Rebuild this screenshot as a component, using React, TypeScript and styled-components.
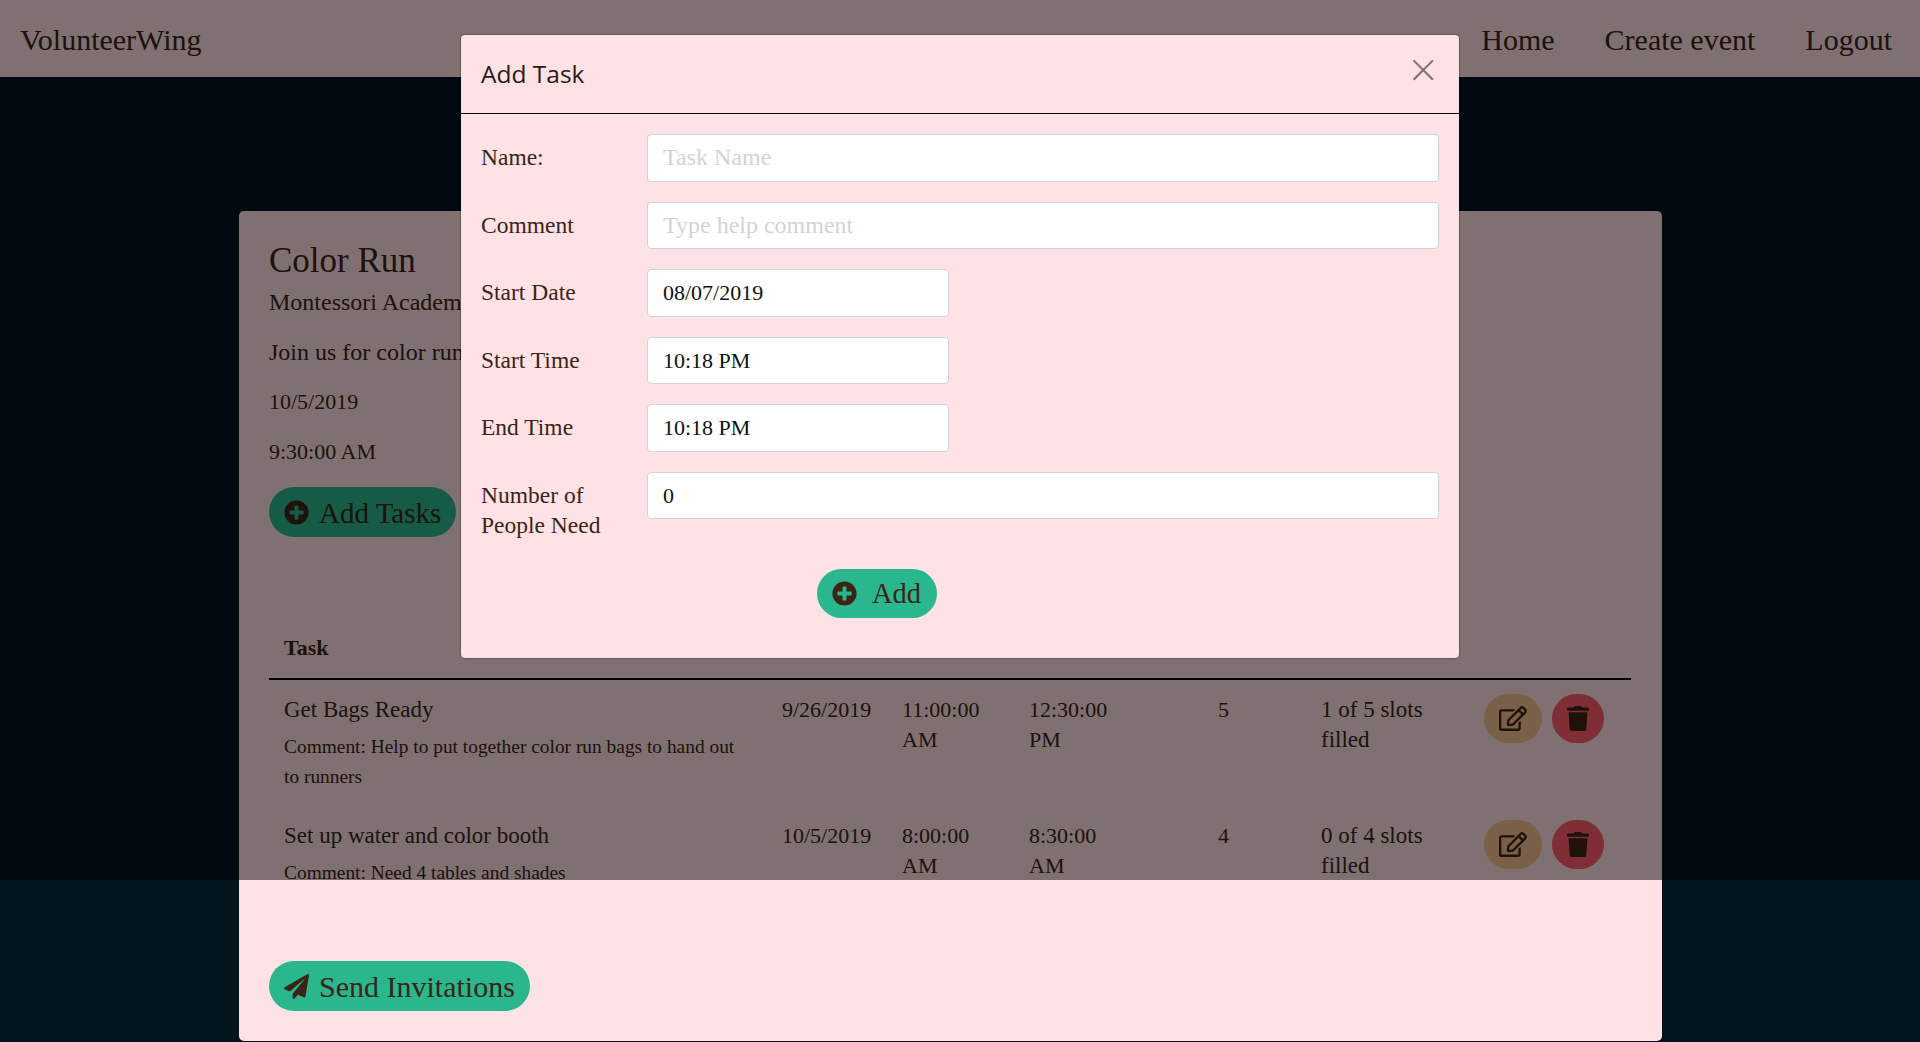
import React from 'react';
import styled, { createGlobalStyle } from 'styled-components';
import { FaPlusCircle, FaPaperPlane, FaRegEdit, FaTrash } from 'react-icons/fa';

const GlobalStyle = createGlobalStyle`
    html, body {
        margin: 0;
        height: 100%;
        overflow: hidden;
        background: #02151f;
    }
    body {
        font-family: "Liberation Serif", serif;
        font-size: 23px;
        line-height: 30px;
        color: #3c2415;
    }
    * {
        box-sizing: border-box;
    }
`

const Page = styled.div`
    position: relative;
    height: 1042px;
    overflow: hidden;
`

const Nav = styled.nav`
    height: 77px;
    background: #ffe2e5;
    display: flex;
    align-items: center;
    justify-content: space-between;
    padding: 2px 28px 0 20px;
    font-size: 30px;
`

const Brand = styled.div``

const NavLinks = styled.div`
    display: flex;
    gap: 50px;
`

const Card = styled.main`
    width: 1423px;
    margin: 134px 0 0 239px;
    background: #ffe2e5;
    border-radius: 5px;
    padding: 30px;
    height: 830px;
`

const EventTitle = styled.h1`
    margin: 0 0 6px;
    font-size: 35px;
    font-weight: 400;
    line-height: 40px;
`

const EventLine = styled.p<{ $numeric?: boolean }>`
    margin: 0 0 20px;
    font-size: ${p => (p.$numeric ? '22px' : '24px')};
`

const PillButton = styled.button<{ $size?: number }>`
    display: inline-flex;
    align-items: center;
    gap: 10px;
    height: 50px;
    padding: 2px 15px 0;
    border: none;
    border-radius: 25px;
    background: #2ab78d;
    color: inherit;
    font-family: inherit;
    font-size: ${p => p.$size || 29}px;
    svg {
        width: 25px;
        height: 25px;
        margin-top: -2px;
        flex: none;
    }
`

const TableWrap = styled.div`
    margin-top: 80px;
    height: 263px;
    overflow: hidden;
`

const Table = styled.table`
    width: 1362px;
    table-layout: fixed;
    border-collapse: collapse;
`

const HeadCell = styled.th<{ $w: number }>`
    width: ${p => p.$w}px;
    padding: 16px 15px 15px;
    text-align: left;
    font-size: 22px;
    font-weight: 700;
    border-bottom: 2px solid #000;
`

const Cell = styled.td<{ $numeric?: boolean; $center?: boolean }>`
    padding: 15px 15px 14px;
    vertical-align: top;
    font-size: ${p => (p.$numeric ? '22px' : '23px')};
    text-align: ${p => (p.$center ? 'center' : 'left')};
`

const Comment = styled.div`
    margin-top: 7px;
    font-size: 19.4px;
`

const Actions = styled.div`
    display: flex;
    gap: 10px;
`

const RoundButton = styled.button<{ $bg: string; $iconW: number }>`
    height: 49px;
    margin-top: -1px;
    padding: 0 15px;
    border: none;
    border-radius: 25px;
    background: ${p => p.$bg};
    color: inherit;
    display: flex;
    align-items: center;
    svg {
        width: ${p => p.$iconW}px;
        height: 25px;
    }
`

const SendRow = styled.div`
    margin-top: 81px;
`

const Backdrop = styled.div`
    position: absolute;
    top: 0;
    left: 0;
    right: 0;
    height: 880px;
    background: rgba(0, 0, 0, 0.5);
`

const Modal = styled.div`
    position: absolute;
    top: 34px;
    left: 460px;
    width: 1000px;
    height: 625px;
    background: #ffe2e5;
    border: 1px solid rgba(0, 0, 0, 0.2);
    border-radius: 5px;
    background-clip: padding-box;
`

const ModalHeader = styled.div`
    height: 79px;
    display: flex;
    justify-content: space-between;
    align-items: flex-start;
    padding: 21px 20px 0;
    border-bottom: 1px solid #000;
`

const ModalTitle = styled.h2`
    margin: 0;
    font-family: "Open Sans", sans-serif;
    font-size: 24.5px;
    font-weight: 400;
    line-height: 36px;
    color: #2a1a10;
`

const CloseButton = styled.button`
    border: none;
    background: none;
    padding: 0;
    margin: -9px 2px 0 0;
    font-family: "Open Sans", sans-serif;
    font-size: 48px;
    font-weight: 300;
    line-height: 44px;
    color: #000;
    opacity: 0.5;
`

const ModalBody = styled.form`
    padding: 20px 20px 0;
    display: flex;
    flex-direction: column;
    gap: 20px;
`

const FormRow = styled.div`
    display: grid;
    grid-template-columns: 166px 1fr;
`

const FieldLabel = styled.label`
    padding-top: 8px;
    font-size: 23.5px;
`

const Field = styled.input<{ $short?: boolean }>`
    display: block;
    width: ${p => (p.$short ? '302px' : '100%')};
    height: 47.5px;
    padding: 1px 15px 0;
    background: #fff;
    border: 1px solid #ced4da;
    border-radius: 4px;
    font-family: inherit;
    font-size: 22px;
    color: #111;
    &::placeholder {
        font-size: 24px;
        color: #d6d2d3;
    }
`

const AddRow = styled.div`
    padding: 9px 0 0 336px;
`

const AddButton = styled(PillButton)`
    height: 49px;
    width: 120px;
    gap: 15px;
`

const columns = [
    { label: 'Task', width: 498 },
    { label: 'Date', width: 120 },
    { label: 'Start', width: 127 },
    { label: 'End', width: 127 },
    { label: 'Need', width: 165 },
    { label: 'Slots', width: 163 },
    { label: '', width: 162 },
]

const tasks = [
    {
        name: 'Get Bags Ready',
        comment: 'Comment: Help to put together color run bags to hand out to runners',
        date: '9/26/2019',
        start: '11:00:00 AM',
        end: '12:30:00 PM',
        need: 5,
        slots: '1 of 5 slots filled',
    },
    {
        name: 'Set up water and color booth',
        comment: 'Comment: Need 4 tables and shades',
        date: '10/5/2019',
        start: '8:00:00 AM',
        end: '8:30:00 AM',
        need: 4,
        slots: '0 of 4 slots filled',
    },
]

const App = () => {
    return (
        <Page>
            <GlobalStyle />
            <Nav>
                <Brand>VolunteerWing</Brand>
                <NavLinks>
                    <span>Home</span>
                    <span>Create event</span>
                    <span>Logout</span>
                </NavLinks>
            </Nav>
            <Card>
                <EventTitle>Color Run</EventTitle>
                <EventLine>Montessori Academy</EventLine>
                <EventLine>Join us for color run</EventLine>
                <EventLine $numeric>10/5/2019</EventLine>
                <EventLine $numeric>9:30:00 AM</EventLine>
                <PillButton><FaPlusCircle />Add Tasks</PillButton>
                <TableWrap>
                    <Table>
                        <thead>
                            <tr>
                                {columns.map(col => <HeadCell key={col.label} $w={col.width}>{col.label}</HeadCell>)}
                            </tr>
                        </thead>
                        <tbody>
                            {tasks.map(task => (
                                <tr key={task.name}>
                                    <Cell>
                                        {task.name}
                                        <Comment>{task.comment}</Comment>
                                    </Cell>
                                    <Cell $numeric>{task.date}</Cell>
                                    <Cell $numeric>{task.start}</Cell>
                                    <Cell $numeric>{task.end}</Cell>
                                    <Cell $numeric $center>{task.need}</Cell>
                                    <Cell>{task.slots}</Cell>
                                    <Cell>
                                        <Actions>
                                            <RoundButton $bg="#f4c08e" $iconW={28}><FaRegEdit /></RoundButton>
                                            <RoundButton $bg="#ff5c6c" $iconW={22}><FaTrash /></RoundButton>
                                        </Actions>
                                    </Cell>
                                </tr>
                            ))}
                        </tbody>
                    </Table>
                </TableWrap>
                <SendRow>
                    <PillButton $size={30}><FaPaperPlane />Send Invitations</PillButton>
                </SendRow>
            </Card>
            <Backdrop />
            <Modal>
                <ModalHeader>
                    <ModalTitle>Add Task</ModalTitle>
                    <CloseButton type="button">×</CloseButton>
                </ModalHeader>
                <ModalBody>
                    <FormRow>
                        <FieldLabel>Name:</FieldLabel>
                        <Field placeholder="Task Name" />
                    </FormRow>
                    <FormRow>
                        <FieldLabel>Comment</FieldLabel>
                        <Field placeholder="Type help comment" />
                    </FormRow>
                    <FormRow>
                        <FieldLabel>Start Date</FieldLabel>
                        <Field $short defaultValue="08/07/2019" />
                    </FormRow>
                    <FormRow>
                        <FieldLabel>Start Time</FieldLabel>
                        <Field $short defaultValue="10:18 PM" />
                    </FormRow>
                    <FormRow>
                        <FieldLabel>End Time</FieldLabel>
                        <Field $short defaultValue="10:18 PM" />
                    </FormRow>
                    <FormRow>
                        <FieldLabel>Number of<br />People Need</FieldLabel>
                        <Field defaultValue="0" />
                    </FormRow>
                    <AddRow>
                        <AddButton type="button" $size={28.5}><FaPlusCircle />Add</AddButton>
                    </AddRow>
                </ModalBody>
            </Modal>
        </Page>
    )
}

export default App
